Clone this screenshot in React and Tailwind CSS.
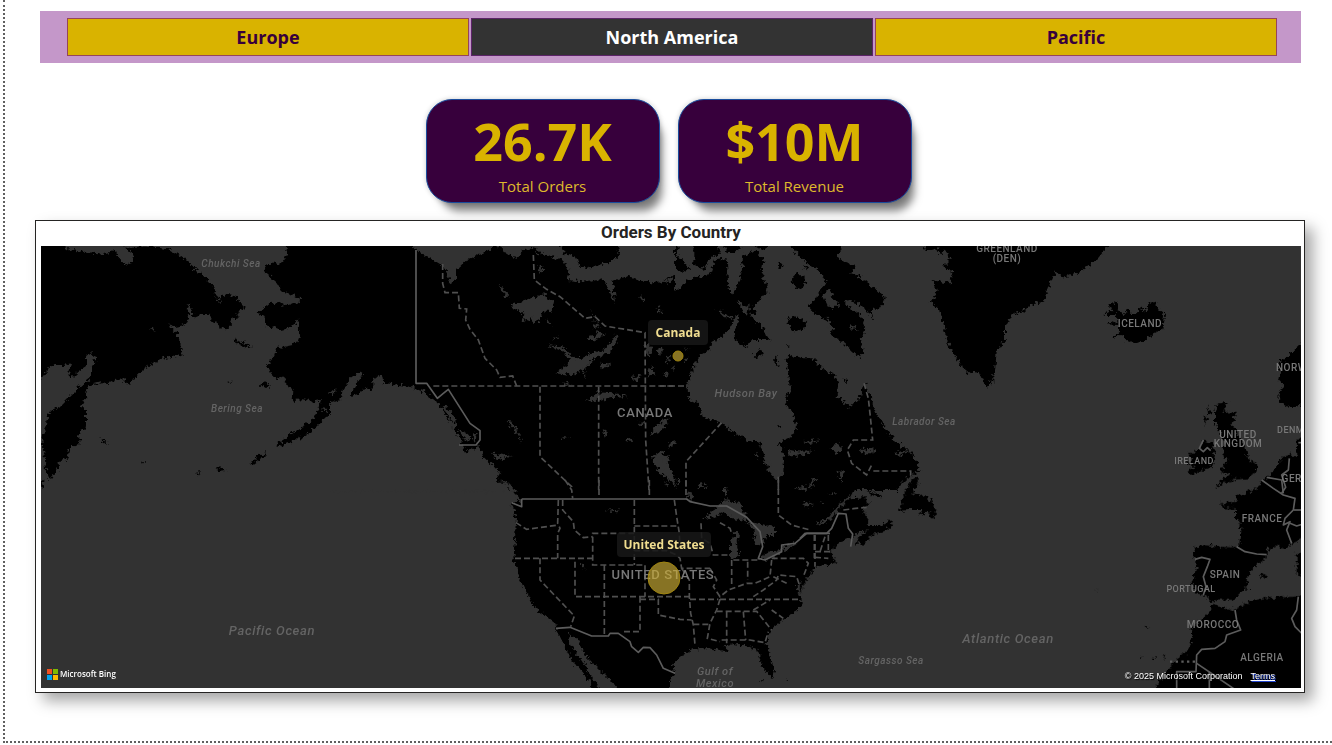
import { useState } from "react";

const REGIONS = ["Europe", "North America", "Pacific"];

const CARDS = [
  { value: "26.7K", label: "Total Orders" },
  { value: "$10M", label: "Total Revenue" },
];

// Each tile holds shapes in its own 3x coordinate space, placed at (x, y) on the map.
const TILES = [
  {
    x: 36,
    y: 240,
    land: [
      "M0 0H90L92 27 130 34 170 38 215 42 238 28 245 50 262 72 285 75 292 55 285 35 262 20 330 20 400 28 440 52 470 78 485 95 515 118 530 135 540 165 550 190 556 165 575 162 600 172 630 205 615 212 600 222 612 232 590 235 582 255 575 270 555 262 530 240 515 222 495 222 475 230 465 222 462 190 453 212 460 235 445 255 415 262 400 250 405 265 425 285 432 310 440 345 430 350 410 346 380 355 345 375 320 390 300 410 280 438 262 418 240 420 215 432 195 430 155 440 150 470 135 500 150 515 150 560 130 575 130 615 100 622 95 655 70 665 65 690 40 720 30 690 25 640 18 600 28 560 40 515 70 500 100 470 130 440 165 410 165 385 185 348 165 340 150 350 150 378 125 395 103 415 100 400 105 370 85 375 60 375 40 382 15 417 0 425Z",
      "M755 0 750 50 735 70 695 72 685 95 725 130 740 155 770 165 795 180 790 190 770 190 745 200 735 185 700 190 665 220 690 235 690 255 715 262 735 270 765 262 790 235 785 260 792 300 770 315 745 320 720 325 715 345 695 375 705 400 725 420 740 405 755 440 772 450 770 480 800 478 830 485 855 480 845 510 830 540 800 560 760 585 730 605 720 620 770 605 800 590 840 565 870 530 905 510 920 480 915 460 950 405 980 400V0Z",
      "M897 530 925 505 940 490 942 510 910 545Z",
      "M593 298 615 305 648 318 635 325 600 312Z",
      "M672 435 690 425 705 438 690 444Z",
      "M640 680 655 655 690 636 684 650 655 668Z",
      "M480 698 500 696 485 706Z M538 690 555 682 572 690 550 693Z M190 590 215 612 200 605Z M318 664 332 664 326 668Z M574 423 588 427 576 429Z",
      "M0 735 30 715 15 745 0 755Z",
    ],
    water: ["M342 268 355 262 355 272Z", "M875 460 905 448 890 462Z", "M855 505 875 508 868 518Z"],
  },
  {
    x: 350,
    y: 240,
    land: ["M0 0H975V750H0Z"],
    water: [
      "M-60 490 0 468 25 462 35 450 70 445 70 415 95 405 100 430 130 432 180 440 220 455 260 485 290 530 315 570 335 605 345 640 365 625 385 615 400 650 440 690 445 720 470 740 485 755H-60Z",
      "M-8 455 0 415 30 393 40 398 15 435 0 466Z",
      "M170 0 205 35 250 60 275 75 290 95 300 130 318 120 318 90 350 60 400 40 430 20 450 18 470 45 500 50 520 30 550 25V0Z",
      "M550 0 560 38 590 45 640 60 655 90 650 120 720 125 760 115 795 190 788 120 830 110 880 125 930 128 975 105V0H800L810 45 770 70 720 85 685 75 680 55 640 40 640 18Z",
      "M480 195 530 180 580 160 590 175 612 185 605 215 580 215 565 245 545 252 550 230 515 245 520 220 490 205Z",
      "M615 400 650 375 660 360 640 335 592 315 640 322 680 360 720 342 760 330 785 305 795 283 802 300 780 337 740 352 705 385 665 405Z",
      "M705 485 740 457 790 460 835 468 780 472 745 482Z",
      "M690 225 715 235 745 250 720 210 735 228 740 245Z",
      "M445 130 465 150 480 180 462 165Z M590 235 605 260 592 250Z M610 288 625 292 615 300Z",
      "M720 290 745 285 740 270 765 285 735 300 710 300Z M730 255 750 262 730 268Z",
      "M755 368 785 372 755 388Z M690 380 705 400 708 420Z M640 430 665 432 645 437Z",
      "M845 410 875 405 860 425Z M885 310 905 320 900 350 888 340Z M920 330 940 325 930 348Z",
      "M565 75 578 80 572 100Z M870 165 885 180 878 190Z M920 205 935 210 925 220Z",
      "M470 543 485 545 512 590 517 608 500 580Z M632 588 662 590 640 594Z M755 565 775 578 765 588Z M825 600 850 595 835 608Z",
      "M900 585 925 550 960 535 930 575Z M905 655 930 635 960 650 945 680 960 730 925 690Z M865 545 885 550 880 560Z",
      "M275 500 290 520 300 540 312 570 318 560 308 520 290 502Z M320 570 340 585 350 605 362 590 345 575Z M370 575 380 585 375 608 368 600Z",
      "M420 640 485 648 450 660Z M430 680 455 700 430 695Z M900 380 920 400 890 410Z M935 395 960 400 945 410Z",
    ],
    solid: ["M198 30V430H230L262 475 280 460 295 448 360 550 390 572V600L378 615H327"],
    dashed: [
      "M250 438H975",
      "M278 72V130L285 158H325L328 205 350 207 347 240 360 268 385 300 405 355 440 390 450 412 488 408 500 438",
      "M550 45 553 120 590 148 630 170 705 235 735 230 765 258 885 278 886 438 887 600 897 750",
      "M570 440V650L665 740V750",
      "M746 440V750",
    ],
  },
  {
    x: 660,
    y: 240,
    land: [
      "M-20 140 60 150 80 120 115 110 150 105 165 60 200 55 205 140 215 160 235 130 245 95 250 45 290 30 310 60 305 100 325 150 300 180 280 200 290 215 270 225 310 265 320 290 335 300 290 300 275 300 260 320 220 300 235 245 235 215 225 235 205 270 185 290 155 305 150 330 120 345 95 390 83 440 85 475 115 490 128 530 155 540 185 548 215 575 265 600 300 605 310 650 325 690 350 720 370 700 372 650 365 625 355 610 395 590 408 560 400 520 375 485 390 450 385 400 380 355 395 345 430 355 460 355 490 390 520 400 535 430 530 470 570 500 600 470 615 430 630 470 650 520 680 570 710 610 745 630 770 660 775 690 745 710 720 735 715 750H-20Z",
      "M-10 0 60 0 50 50 75 70 90 85 60 95 35 85 0 60Z",
      "M100 0H160L185 40 150 55 130 90 100 70Z M185 0 230 0 240 30 205 40Z M270 0H330L320 30 290 22Z",
      "M375 0 420 50 455 80 480 95 500 125 480 150 470 175 445 200 470 225 500 245 520 265 510 280 550 310 600 355 612 335 600 300 615 275 605 230 580 210 555 190 560 180 590 190 620 210 640 240 635 210 665 200 675 175 640 140 600 110 570 100 590 80 560 70 530 50 545 30 530 0Z",
      "M395 120 410 100 432 105 436 130 420 148 402 145Z",
      "M380 240 400 228 430 240 445 255 420 270 395 275Z",
      "M278 345 300 330 312 340 290 357Z M342 355 355 352 352 380 344 372Z M378 312 390 318 382 322Z M548 420 560 418 556 432Z M355 555 364 560 357 568Z",
      "M355 70 368 72 366 88 352 84Z M430 75 445 90 432 88Z",
      "M790 0 795 35 830 25 840 45 860 30 870 60 850 80 880 100 870 130 820 120 830 150 815 190 840 210 850 260 865 310 880 340 905 380 930 400 965 395 1000 435V0Z",
    ],
    water: [
      "M485 160 510 150 520 180 545 200 505 200Z M500 235 515 250 505 262Z M570 250 600 275 575 265Z",
      "M165 205 220 235 195 235Z M230 180 260 200 270 190 262 225 240 205Z M310 665 328 662 335 680 318 672Z",
      "M30 605 48 600 45 615 25 620Z M385 630 430 635 460 630 430 645 385 650Z M430 605 485 598 450 612Z",
      "M515 625 530 605 550 625 530 642Z M538 690 555 698 545 725Z M600 630 645 625 640 640 605 640Z",
      "M450 745 460 715 478 710 462 728Z M400 745 440 740 430 750Z M10 640 20 660 38 700 50 745 30 720 5 680Z",
      "M120 730 145 740 115 742Z M40 378 44 395 36 388Z M70 320 90 330 75 325Z M20 375 34 345 24 345Z M700 640 745 630 715 650Z",
      "M-5 560 20 530 5 550Z M15 120 40 115 30 130Z M285 640 300 645 290 655Z M70 360 85 352 80 364Z",
    ],
    solid: [],
    dashed: ["M0 438H75", "M185 548 78 665V750", "M355 710V750", "M612 430 625 475 632 540 638 600 580 600 562 630 575 670 620 705 635 675", "M640 693H752V710"],
  },
  {
    x: 980,
    y: 215,
    land: [
      "M0 60H400L390 93 370 110 345 140 300 170 260 185 235 180 228 165 210 205 190 260 150 270 130 290 95 300 75 340 75 375 50 410 45 470 30 490 25 520 10 500 0 480Z",
      "M370 300 395 285 385 265 405 262 420 290 430 300 445 280 455 295 475 290 485 275 495 290 510 260 525 258 540 290 555 300 550 340 520 355 490 380 465 385 435 375 425 360 400 368 420 350 415 330 378 328 412 318 410 300 385 300Z",
      "M985 365 945 400 920 430 890 445 905 470 895 490 910 510 895 540 905 565 930 578 985 560Z",
    ],
    water: [],
    solid: [],
    dashed: [],
  },
  {
    x: 480,
    y: 480,
    land: [
      "M60 0 95 30 125 65 95 68 108 110 105 180 100 235 120 300 165 385 225 430 230 450 250 490 275 540 300 570 325 600 345 640H372L330 585 310 545 285 515 268 480 268 460 290 475 320 530 360 570 395 605 420 640H570L570 600 585 575 575 555 600 530 640 505 685 505 720 510 750 515 730 500 760 492 810 500 835 510 840 540 860 580 878 597 885 570 870 530 860 490 870 450 910 420 950 390 965 370 955 345 950 320 975 290 1000 265 1050 250V0Z",
      "M270 540 290 542 280 550Z M916 595 924 605 918 608Z M840 600 850 602 845 606Z",
    ],
    water: [
      "M665 118 700 90 740 58 775 68 795 100 802 125 760 115 735 100 700 112Z",
      "M765 155 778 157 770 185 775 225 760 242 750 225 750 190Z",
      "M805 125 830 130 885 140 885 165 860 165 850 190 835 195 820 180 825 150Z",
      "M835 235 870 215 905 208 900 222 860 242Z M905 198 950 188 940 205 910 210Z",
      "M300 245 312 255 316 266 305 258Z M378 92 422 88 405 97Z",
      "M620 35 640 42 635 60 622 50Z M728 25 742 22 742 42 730 45Z M655 12 680 20 660 20Z M985 10 1005 0 995 22Z M970 65 1000 72 975 80Z M552 0 570 18 558 15Z M590 0 598 0 595 22Z",
      "M60 0 95 15 110 35 100 35Z",
    ],
    solid: [
      "M125 57H620L630 65 690 78 740 78 800 112 840 155 848 200 835 235 855 240 905 215V195L945 190 980 160H1050",
      "M228 445 270 442 335 468H385L390 460H415L450 485 455 500 475 517 490 502 510 503 530 525 550 565 585 580",
      "M95 68 125 80V57",
    ],
    dashed: [
      "M108 128 140 148 235 135",
      "M235 60 233 130 240 145 233 160V235",
      "M105 235H338",
      "M248 60V90L280 125 283 150 310 173 338 170",
      "M463 160H338V255H495V350",
      "M463 60V255",
      "M463 138H595",
      "M583 60 590 110 598 160 600 200",
      "M463 212H560L590 225 600 235 605 265H690",
      "M180 235V300L283 408 272 440",
      "M285 245V350H630",
      "M373 255V465",
      "M480 350V455H425",
      "M480 358H535V405L600 418 635 420",
      "M605 265 628 300V350L632 400 640 435 645 495",
      "M630 358H715",
      "M720 358H960",
      "M640 433H690",
      "M720 358 710 390 690 430 682 475 720 485",
      "M710 394H830L875 450",
      "M740 395V490",
      "M790 395 797 480",
      "M725 480 810 480 855 488 865 455",
      "M663 130 665 175 690 190 700 225H750",
      "M720 128 750 145 755 160",
      "M690 265 710 300 700 320 720 350 745 330 800 310 825 310 870 290 875 240",
      "M755 240V320",
      "M803 245V300",
      "M760 240H835",
      "M875 235H970L985 250 970 290",
      "M820 350 850 330 890 300 895 285 950 290 960 320",
      "M880 290 920 310",
      "M1003 165V235",
      "M895 0V105L935 135 990 150",
      "M820 390 870 360",
      "M875 390 910 415",
      "M255 0 275 30 278 55",
      "M357 0V55",
      "M508 0V55",
      "M618 0V55",
    ],
  },
  {
    x: 800,
    y: 470,
    land: [
      "M0 0H360L330 20 300 35 280 50 200 50 165 60 150 75 110 110 90 140 50 165 95 145 120 115 150 85 195 82 205 100 190 115 200 145 205 165 240 165 270 150 278 165 255 185 215 195 190 225 170 220 175 200 205 180 170 190 155 205 130 210 95 235 95 250 105 275 70 285 40 295 25 320 10 350 0 370Z",
      "M350 20 355 40 340 70 380 80 395 95 408 125 405 148 385 140 390 120 355 140 365 120 330 120 295 122 310 100 305 85 320 60 335 30Z",
      "M200 62 240 72 248 82 225 80Z",
      "M885 359 893 361 886 363Z M1035 468 1047 470 1036 472Z M-8 395 4 400 -2 410Z",
    ],
    water: [
      "M28 55 40 30 55 22 42 40Z M85 72 100 66 108 76Z M10 100 40 98 15 106Z M112 5 132 8 125 35Z M60 98 75 96 68 102Z",
      "M45 165 90 138 110 112 95 148 60 162Z",
    ],
    solid: ["M0 205 15 190H80L95 175 115 130 138 132 145 175 158 192 152 230"],
    dashed: ["M85 195V240", "M45 195V290", "M75 200 60 245", "M45 245H95", "M45 262 85 265", "M130 120 160 116 200 112"],
  },
  {
    x: 1120,
    y: 400,
    land: [
      "M290 10 325 5 310 35 348 40 335 70 350 100 380 150 385 180 412 190 410 215 385 235 350 238 310 250 285 265 305 240 330 225 300 215 305 205 325 180 310 165 315 130 300 100 285 70 285 40Z",
      "M235 150 250 125 275 130 285 160 280 195 250 210 215 225 205 215 225 200 200 190 215 180 205 160 235 155Z",
      "M262 20 275 35 265 50Z M255 45 265 60 252 70Z",
      "M560 165 510 165 490 170 470 200 450 225 425 245 410 265 380 275 375 285 350 280 350 305 300 310 310 325 345 325 345 350 362 370 358 440 330 442 245 435 220 445 225 480 230 500 215 550 225 580 255 585 275 610 295 598 345 600 370 570 385 560 380 540 400 500 440 475 440 450 470 437 495 445 520 430 560 405Z",
      "M560 105 530 120 532 165 560 180Z",
      "M530 460 560 455V545L530 520Z",
      "M422 528 434 520 444 528 434 538Z",
      "M95 880 130 830 170 775 205 750 215 730 215 690 240 660 265 640 275 615 300 620 340 630 390 605 430 595 560 588V880Z",
      "M75 679 86 681 76 683Z M60 765 68 772 62 774Z M98 775 108 770 104 782Z M130 772 140 765 134 778Z",
    ],
    water: [],
    solid: [
      "M350 440 375 455 410 462 440 464",
      "M225 478 245 472 270 478 262 500 250 530 258 560 250 585",
      "M425 240 460 265 490 285 525 295 520 330 495 355 490 375 510 365 500 390 515 430",
      "M440 232 485 240 490 280",
      "M508 175 505 210 485 225 497 262 485 280",
      "M522 330H560",
      "M510 370 530 378 560 368",
      "M345 630 350 660 362 690 320 705 315 725 285 745 245 748 230 765 228 815H170V880",
      "M230 790 350 872",
      "M268 815V880",
      "M535 590 530 630 515 655 525 680 560 715",
      "M250 120 238 145 250 155 262 143 272 152",
      "M535 128H560",
    ],
    dashed: [],
    dotted: ["M150 785H228"],
  },
];

const COUNTRIES = [
  { x: 645, y: 417, name: "CANADA", size: "text-[13px]" },
  { x: 663, y: 579, name: "UNITED STATES", size: "text-[13px]" },
  { x: 1007, y: 252, name: "GREENLAND", size: "text-[10px]" },
  { x: 1007, y: 262, name: "(DEN)", size: "text-[10px]" },
  { x: 1140, y: 327, name: "ICELAND", size: "text-[10px]" },
  { x: 1298, y: 371, name: "NORWAY", size: "text-[10px]" },
  { x: 1238, y: 438, name: "UNITED", size: "text-[10px]" },
  { x: 1238, y: 447, name: "KINGDOM", size: "text-[10px]" },
  { x: 1300, y: 433, name: "DENMARK", size: "text-[9px]" },
  { x: 1194, y: 464, name: "IRELAND", size: "text-[9px]" },
  { x: 1307, y: 482, name: "GERMANY", size: "text-[10px]" },
  { x: 1262, y: 522, name: "FRANCE", size: "text-[10px]" },
  { x: 1225, y: 578, name: "SPAIN", size: "text-[10px]" },
  { x: 1191, y: 592, name: "PORTUGAL", size: "text-[9px]" },
  { x: 1213, y: 628, name: "MOROCCO", size: "text-[10px]" },
  { x: 1262, y: 661, name: "ALGERIA", size: "text-[10px]" },
];

const SEAS = [
  { x: 231, y: 267, name: "Chukchi Sea", size: "text-[10px]" },
  { x: 237, y: 412, name: "Bering Sea", size: "text-[10px]" },
  { x: 746, y: 397, name: "Hudson Bay", size: "text-[11px]" },
  { x: 924, y: 425, name: "Labrador Sea", size: "text-[10px]" },
  { x: 272, y: 635, name: "Pacific Ocean", size: "text-[13px]" },
  { x: 1008, y: 643, name: "Atlantic Ocean", size: "text-[13px]" },
  { x: 891, y: 664, name: "Sargasso Sea", size: "text-[10px]" },
  { x: 715, y: 675, name: "Gulf of", size: "text-[11px]" },
  { x: 715, y: 687, name: "Mexico", size: "text-[11px]" },
];

const MARKERS = [
  { name: "Canada", x: 678, y: 356, r: 5, labelY: 333, width: 60 },
  { name: "United States", x: 664, y: 578, r: 16, labelY: 545, width: 94 },
];

function TileGroup({ kind, className }) {
  return TILES.map((tile) => (
    <g key={`${tile.x}-${tile.y}`} transform={`translate(${tile.x} ${tile.y}) scale(${1 / 3})`} className={className}>
      {(tile[kind] || []).map((d) => (
        <path key={d} d={d} />
      ))}
    </g>
  ));
}

function OrdersMap() {
  return (
    <svg
      viewBox="41 246 1260 442"
      className="block w-full bg-[#323232] font-[Roboto,sans-serif]"
      role="img"
      aria-label="Orders by country"
    >
      <defs>
        <filter id="coast" filterUnits="userSpaceOnUse" x="20" y="230" width="1300" height="480" colorInterpolationFilters="sRGB">
          <feTurbulence type="fractalNoise" baseFrequency="0.26" numOctaves="3" seed="7" />
          <feDisplacementMap in="SourceGraphic" scale="8" xChannelSelector="R" yChannelSelector="G" />
        </filter>
      </defs>
      <g filter="url(#coast)">
        <TileGroup kind="land" className="fill-black" />
        <TileGroup kind="water" className="fill-[#323232]" />
      </g>
      <TileGroup kind="dashed" className="fill-none stroke-[#505050] stroke-[5] [stroke-dasharray:18_9]" />
      <TileGroup kind="dotted" className="fill-none stroke-[#5c5c5c] stroke-[7] [stroke-dasharray:7_10]" />
      <TileGroup kind="solid" className="fill-none stroke-[#5c5c5c] stroke-[5] [stroke-linejoin:round]" />
      {SEAS.map((s) => (
        <text key={s.name} x={s.x} y={s.y} textAnchor="middle" className={`fill-[#646464] font-medium tracking-wider italic ${s.size}`}>
          {s.name}
        </text>
      ))}
      {COUNTRIES.map((c) => (
        <text key={c.name} x={c.x} y={c.y} textAnchor="middle" className={`fill-[#787878] font-medium tracking-wider ${c.size}`}>
          {c.name}
        </text>
      ))}
      {MARKERS.map((m) => (
        <g key={m.name}>
          <rect x={m.x - m.width / 2} y={m.labelY - 13} width={m.width} height="25" rx="4" className="fill-[#171717]/85" />
          <text
            x={m.x}
            y={m.labelY + 4}
            textAnchor="middle"
            className="fill-[#f0dd90] font-['Open_Sans',sans-serif] text-[12px] font-bold"
          >
            {m.name}
          </text>
          <circle cx={m.x} cy={m.y} r={m.r} className="fill-[#cfb038]/65 stroke-[#a08510] stroke-1" />
        </g>
      ))}
    </svg>
  );
}

function BingLogo() {
  return (
    <div className="absolute bottom-2 left-1.5 flex items-center gap-0.5 text-[8px] leading-3 font-semibold text-white">
      <svg viewBox="0 0 11 11" className="size-[11px]" aria-hidden="true">
        <path d="M0 0h5v5H0z" fill="#f25022" />
        <path d="M6 0h5v5H6z" fill="#7fba00" />
        <path d="M0 6h5v5H0z" fill="#00a4ef" />
        <path d="M6 6h5v5H6z" fill="#ffb900" />
      </svg>
      Microsoft Bing
    </div>
  );
}

export default function App() {
  const [region, setRegion] = useState("North America");

  return (
    <main className="ml-[3px] border-b-2 border-l-2 border-dotted border-[#606060] bg-white pt-[11px] pr-[27px] pb-12 pl-[30px] font-['Open_Sans',sans-serif]">
      <nav aria-label="Region" className="mr-1 ml-[5px] grid grid-cols-3 gap-0.5 bg-[#c497c9] py-[7px] pr-6 pl-[27px]">
        {REGIONS.map((name) => (
          <button
            key={name}
            type="button"
            aria-pressed={region === name}
            onClick={() => setRegion(name)}
            className={
              region === name
                ? "h-[38px] border border-[#5c2468] bg-[#333333] text-[18px] font-bold text-white"
                : "h-[38px] border border-[#96455a] bg-[#d9b300] text-[18px] font-bold text-[#37003c]"
            }
          >
            {name}
          </button>
        ))}
      </nav>

      <section className="mt-9 flex justify-center gap-[18px] pr-[3px]">
        {CARDS.map((card) => (
          <div
            key={card.label}
            className="flex h-[104px] w-[234px] flex-col items-center rounded-[26px] border border-[#1a4c9c] bg-[#37003c] pt-3 shadow-[8px_14px_8px_-6px_rgba(0,0,0,0.5),0_0_5px_rgba(0,0,0,0.2)]"
          >
            <p className="text-[52px] leading-[58px] font-bold text-[#d9b300]">{card.value}</p>
            <p className="text-[15px] leading-8 text-[#dfb92c]">{card.label}</p>
          </div>
        ))}
      </section>

      <section className="mt-[17px] border border-[#252423] bg-white pr-[3px] pb-1 pl-[5px] shadow-[8px_8px_14px_rgba(0,0,0,0.35)]">
        <h2 className="h-[25px] text-center font-[Roboto,sans-serif] text-[17px] leading-[22px] font-bold text-[#252423]">Orders By Country</h2>
        <div className="relative">
          <OrdersMap />
          <BingLogo />
          <p className="absolute right-[26px] bottom-1 flex gap-2 font-['Liberation_Sans',sans-serif] text-[9px] leading-4 text-white [text-shadow:1px_1px_1px_black]">
            <span>© 2025 Microsoft Corporation</span>
            <a href="#terms" className="underline [text-shadow:1px_1px_0_#2244cc]">
              Terms
            </a>
          </p>
        </div>
      </section>
    </main>
  );
}
